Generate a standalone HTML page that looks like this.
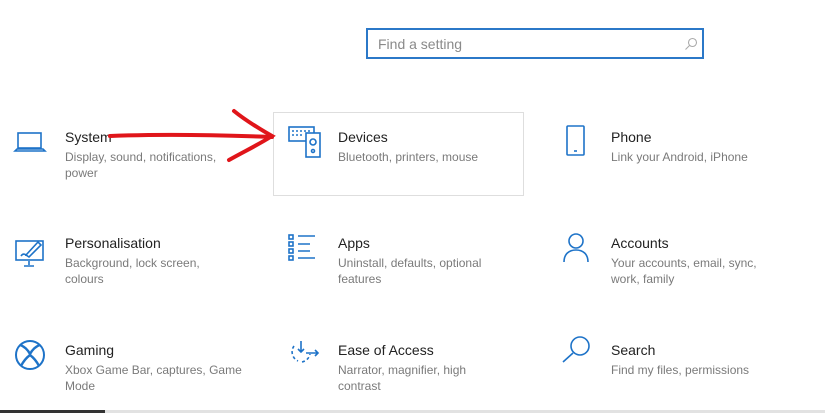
<!DOCTYPE html>
<html><head><meta charset="utf-8"><style>
body{margin:0;width:825px;height:413px;background:#fff;position:relative;overflow:hidden;font-family:"Liberation Sans",sans-serif}
.s{position:absolute;left:366px;top:28px;width:338px;height:31px;border:2px solid #2b78c8;box-sizing:border-box}
.s span{position:absolute;left:10px;top:6px;font-size:14px;color:#8a8a8a}
.t{position:absolute;font-size:14px;color:#222;white-space:nowrap}
.d{position:absolute;font-size:12px;color:#7a7a7a;line-height:16px;width:170px}
.box{position:absolute;left:273px;top:112px;width:251px;height:84px;border:1.5px solid #dedede;box-sizing:border-box}
.bot{position:absolute;left:0;top:410px;width:825px;height:3px;background:#e2e2e2}
.bot i{position:absolute;left:0;top:0;width:105px;height:3px;background:#333}
svg{position:absolute;left:0;top:0}
</style></head><body>
<div class="s"><span>Find a setting</span>
<svg style="left:316px;top:7px" width="14" height="14" viewBox="0 0 14 14"><circle cx="8.5" cy="5.5" r="4" fill="none" stroke="#aaa" stroke-width="1.1"/><path d="M5.5 8.5L1.5 12.5" stroke="#aaa" stroke-width="1.1"/></svg></div>
<div class="box"></div>

<div class="t" style="left:65px;top:129px">System</div>
<div class="d" style="left:65px;top:149px">Display, sound, notifications, power</div>
<div class="t" style="left:338px;top:129px">Devices</div>
<div class="d" style="left:338px;top:149px;width:180px">Bluetooth, printers, mouse</div>
<div class="t" style="left:611px;top:129px">Phone</div>
<div class="d" style="left:611px;top:149px;width:200px">Link your Android, iPhone</div>

<div class="t" style="left:65px;top:235px">Personalisation</div>
<div class="d" style="left:65px;top:255px">Background, lock screen, colours</div>
<div class="t" style="left:338px;top:235px">Apps</div>
<div class="d" style="left:338px;top:255px;width:160px">Uninstall, defaults, optional features</div>
<div class="t" style="left:611px;top:235px">Accounts</div>
<div class="d" style="left:611px;top:255px;width:150px">Your accounts, email, sync, work, family</div>

<div class="t" style="left:65px;top:342px">Gaming</div>
<div class="d" style="left:65px;top:362px;width:185px">Xbox Game Bar, captures, Game Mode</div>
<div class="t" style="left:338px;top:342px">Ease of Access</div>
<div class="d" style="left:338px;top:362px;width:150px">Narrator, magnifier, high contrast</div>
<div class="t" style="left:611px;top:342px">Search</div>
<div class="d" style="left:611px;top:362px;width:200px">Find my files, permissions</div>

<svg width="825" height="413" viewBox="0 0 825 413" fill="none" stroke="#1e73c8" stroke-width="1.6">
<rect x="18" y="133" width="23" height="15"/><path d="M15 151H45l-2 -2H17z"/>
<rect x="289" y="127" width="25" height="14"/><rect x="306" y="133" width="14" height="24" fill="#fff"/>
<circle cx="313" cy="142" r="3"/><circle cx="313" cy="151" r="1.5"/>
<path d="M292 131h2M296 131h2M300 131h2M304 131h2M308 131h2M292 135h2M296 135h2M300 135h2" stroke-width="1.4"/>
<rect x="567" y="126" width="17" height="29" rx="1"/><path d="M574 151h3"/>
<rect x="16" y="241" width="27" height="19"/><path d="M29 261v4M24 266h10"/>
<path d="M26 255l12 -13 3 3 -12 12z" fill="#fff"/><path d="M21 256c2 -3 5 -2 5 0"/>
<rect x="289" y="235" width="4" height="4"/><rect x="289" y="242" width="4" height="4"/><rect x="289" y="249" width="4" height="4"/><rect x="289" y="256" width="4" height="4"/>
<path d="M298 236h17M298 244h12M298 251h12M298 258h17"/>
<circle cx="576" cy="241" r="7"/><path d="M564 262c0 -8 5 -12 12 -12s12 4 12 12"/>
<circle cx="30" cy="355" r="14" stroke-width="2"/>
<path d="M20 345c4 1 8 5 10 9c2 -4 6 -8 10 -9M21 366c2 -4 5 -8 9 -11c4 3 7 7 9 11" stroke-width="2.4"/>
<path d="M294 346a10 10 0 0 0 4 15M302 362a10 10 0 0 0 8 -8" stroke-dasharray="3 2.5"/>
<path d="M301 341v11M298 349l3 3 3 -3M306 353h12M315 350l3 3 -3 3"/>
<circle cx="580" cy="346" r="9"/><path d="M573 353l-10 9"/>
<path d="M110 136C160 134 220 135 272 137" stroke="#e0151a" stroke-width="4" stroke-linecap="round"/>
<path d="M234 111C245 120 258 128 272 136C258 145 243 152 229 160" stroke="#e0151a" stroke-width="4" stroke-linecap="round"/>
</svg>
<div class="bot"><i></i></div>
</body></html>
